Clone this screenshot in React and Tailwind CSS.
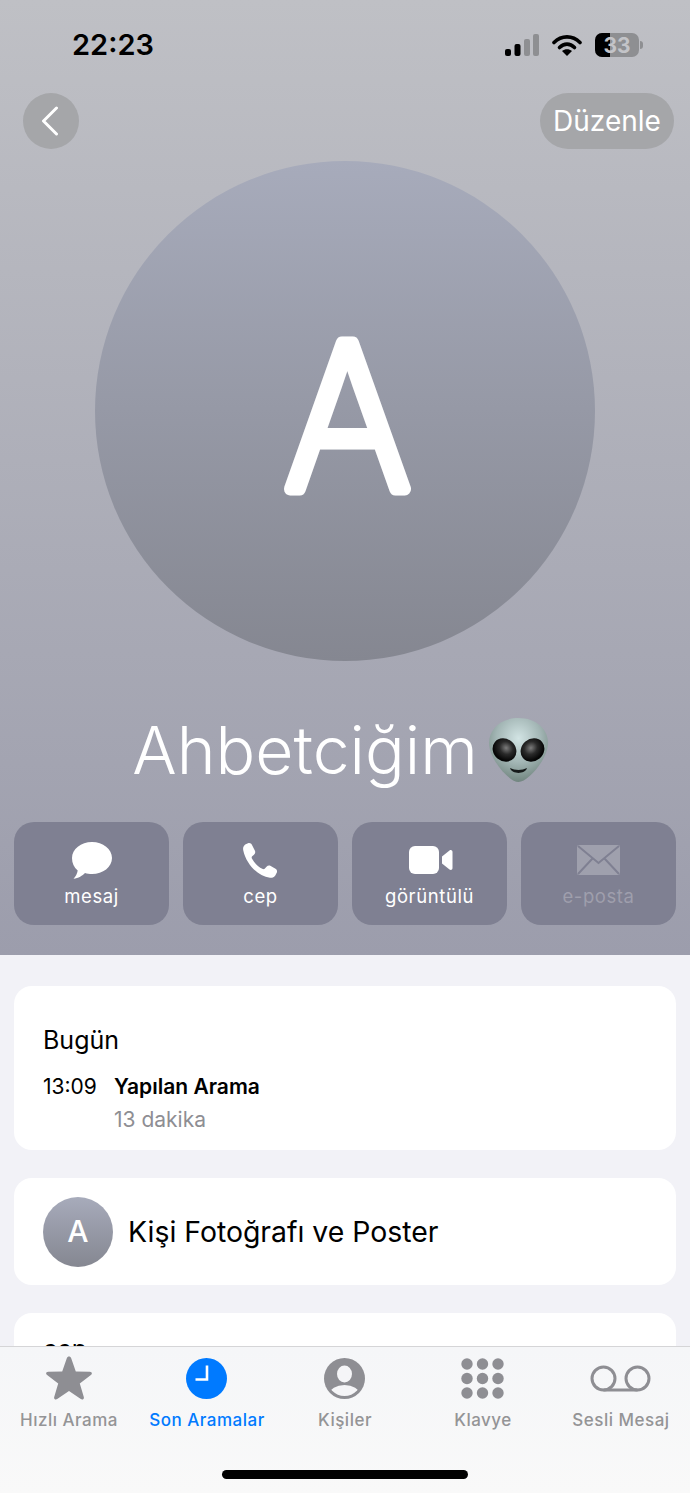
import React from "react";

const Action = ({ label, dim, children }) => (
  <div className="flex h-[103px] w-[155px] flex-col items-center rounded-[20px] bg-[#7f8092]">
    <div className={`mt-[19px] flex h-[38px] items-center justify-center ${dim ? "opacity-25" : ""}`}>{children}</div>
    <span className={`mt-[5px] text-[18.500px] leading-[24px] tracking-[0.6px] ${dim ? "text-white/25" : "text-white"}`}>{label}</span>
  </div>
);

const Tab = ({ label, active, children }) => (
  <div className="flex w-[138px] flex-col items-center">
    <div className="flex h-[46px] w-full items-center justify-center pr-[1px]">{children}</div>
    <span className={`mt-[8px] whitespace-nowrap text-[17px] leading-[22px] font-medium tracking-[0.5px] ${active ? "text-[#007aff]" : "text-[#949496]"}`}>{label}</span>
  </div>
);

const Alien = () => (
  <svg width="59" height="64" viewBox="0 0 59 64" className="ml-[11px] shrink-0">
    <defs>
      <radialGradient id="alienHead" cx="50%" cy="32%" r="68%">
        <stop offset="0%" stopColor="#d2e4e4" />
        <stop offset="55%" stopColor="#a3b6b5" />
        <stop offset="100%" stopColor="#71857f" />
      </radialGradient>
      <radialGradient id="alienEye" cx="50%" cy="38%" r="55%">
        <stop offset="0%" stopColor="#7c7c7c" />
        <stop offset="50%" stopColor="#2a2a2a" />
        <stop offset="100%" stopColor="#060606" />
      </radialGradient>
    </defs>
    <path d="M29.500 0C47 0 59 11 59 25C59 41 39 64 29.500 64C20 64 0 41 0 25C0 11 12 0 29.500 0Z" fill="url(#alienHead)" />
    <ellipse cx="15.500" cy="32" rx="12.500" ry="11" fill="url(#alienEye)" transform="rotate(40 15.500 32)" />
    <ellipse cx="43.500" cy="32" rx="12.500" ry="11" fill="url(#alienEye)" transform="rotate(-40 43.500 32)" />
    <path d="M21 50C26 52.500 33 52.500 38 50C36 56.500 23 56.500 21 50Z" fill="#161a1a" />
  </svg>
);

export default function App() {
  return (
    <div className="flex h-[1493px] w-[690px] flex-col overflow-hidden bg-[#f2f2f7] font-['Inter',sans-serif]">
      <header className="flex h-[955px] shrink-0 flex-col bg-gradient-to-b from-[#bfc0c5] to-[#9c9dac]">
        <div className="flex h-[93px] shrink-0 items-start justify-between pl-[72px] pr-[47px]">
          <span className="mt-[26px] text-[29px] leading-[38px] font-semibold text-black">22:23</span>
          <div className="mt-[33px] flex items-center">
            <svg width="34" height="22" viewBox="0 0 34 22">
              <rect x="0" y="15" width="6" height="7" rx="2" fill="#000" />
              <rect x="9.500" y="10" width="6" height="12" rx="2" fill="#000" />
              <rect x="19" y="5" width="6" height="17" rx="2" fill="#8e8f92" />
              <rect x="28" y="0" width="6" height="22" rx="2" fill="#8e8f92" />
            </svg>
            <svg width="30" height="22" viewBox="0 0 30 22" className="ml-[13px]">
              <path d="M2 8.500C9.500 1 20.500 1 28 8.500" fill="none" stroke="#000" strokeWidth="3.600" strokeLinecap="round" />
              <path d="M7.500 13.500C12 9 18 9 22.500 13.500" fill="none" stroke="#000" strokeWidth="3.600" strokeLinecap="round" />
              <path d="M15 22L10 17C13 14.500 17 14.500 20 17Z" fill="#000" />
            </svg>
            <div className="relative ml-[13px] h-[24px] w-[44px] overflow-hidden rounded-[7px] bg-[#8e8f92]">
              <div className="absolute inset-y-0 left-0 w-[15px] bg-black" />
              <span className="absolute inset-0 flex items-center justify-center text-[21px] leading-none font-bold text-[#c3c4c8]">33</span>
            </div>
            <div className="ml-[1px] h-[8px] w-[3px] rounded-r-[3px] bg-[#8e8f92]" />
          </div>
        </div>

        <div className="flex h-[56px] shrink-0 items-center justify-between pl-[23px] pr-[16px]">
          <div className="flex h-[56px] w-[56px] items-center justify-center rounded-full bg-[#a5a6a9]">
            <svg width="18" height="30" viewBox="0 0 18 30" className="mr-[2px]">
              <path d="M15.500 2L2.500 15L15.500 28" fill="none" stroke="#fff" strokeWidth="3" strokeLinecap="round" strokeLinejoin="round" />
            </svg>
          </div>
          <div className="flex h-[56px] w-[134px] items-center justify-center rounded-full bg-[#a5a6a9] text-[28px] text-white">Düzenle</div>
        </div>

        <div className="mx-auto mt-[12px] flex h-[500px] w-[500px] shrink-0 items-center justify-center rounded-full bg-gradient-to-b from-[#a7abbb] to-[#858791]">
          <svg width="200" height="260" viewBox="0 0 200 260">
            <text
              x="0"
              y="0"
              transform="translate(102.500 208) scale(0.96 1)"
              textAnchor="middle"
              fontFamily="Inter, sans-serif"
              fontSize="200"
              fontWeight="200"
              fill="#fff"
              stroke="#fff"
              strokeWidth="13"
              strokeLinejoin="round"
            >
              A
            </text>
          </svg>
        </div>

        <div className="mt-[55px] flex h-[68px] shrink-0 items-center justify-center pr-[10px]">
          <span className="text-[66px] leading-none font-light text-white">Ahbetciğim</span>
          <Alien />
        </div>

        <div className="mt-[38px] flex justify-between px-[14px]">
          <Action label="mesaj">
            <svg width="40" height="37" viewBox="0 0 40 37">
              <path d="M20 0C31 0 40 7 40 16C40 25 31 32 20 32C17.500 32 15 31.700 13 31C10.500 33.500 6.500 36.500 1.500 36.800C3.500 35 5.500 31 5.700 28.500C2 25.500 0 21 0 16C0 7 9 0 20 0Z" fill="#fff" />
            </svg>
          </Action>
          <Action label="cep">
            <svg width="34" height="35" viewBox="0 0 34 35" className="mr-[2px]">
              <path d="M2.200 1.500L5 0.300C6.700 -0.300 8.200 0.400 9 2L11.800 7.500C12.600 9 12.300 10.500 11 11.700L9.200 13.300C8.600 13.900 8.500 14.600 8.900 15.400C11.600 20.300 15 24 19.800 26C20.600 26.300 21.300 26.200 21.900 25.500L23.500 23.800C24.700 22.500 26.200 22.200 27.700 23L32.500 25.700C34 26.600 34.500 28.200 33.700 29.800L32.300 32.500C31.100 34.300 29.300 35 27 34.800C14.500 33.300 3 20.500 0.300 7.500C-0.300 5 0.400 2.900 2.200 1.500Z" fill="#fff" />
            </svg>
          </Action>
          <Action label="görüntülü">
            <svg width="44" height="28" viewBox="0 0 44 28" className="ml-[3px]">
              <rect x="0" y="0" width="30" height="28" rx="6" fill="#fff" />
              <path d="M33 10.500L40.500 4.500C41.800 3.500 43.500 4.300 43.500 6V22C43.500 23.700 41.800 24.500 40.500 23.500L33 17.500Z" fill="#fff" />
            </svg>
          </Action>
          <Action label="e-posta" dim>
            <svg width="43" height="30" viewBox="0 0 43 30">
              <rect x="0" y="0" width="43" height="30" rx="2" fill="#fff" />
              <path d="M1 1L21.500 18L42 1M1 29L15.500 13.500M42 29L27.500 13.500" fill="none" stroke="#7f8092" strokeWidth="2" />
            </svg>
          </Action>
        </div>
      </header>

      <main className="flex min-h-0 flex-1 flex-col gap-[28px] overflow-hidden px-[14px] pt-[31px]">
        <section className="h-[164px] shrink-0 rounded-[18px] bg-white pl-[29px] pt-[38px]">
          <div className="text-[25px] leading-[32px] text-black">Bugün</div>
          <div className="mt-[17px] flex text-[21px] leading-[28px]">
            <span className="w-[71px] text-black">13:09</span>
            <span className="font-semibold text-black">Yapılan Arama</span>
          </div>
          <div className="mt-[5px] pl-[71px] text-[21px] leading-[28px] text-[#8e8e93]">13 dakika</div>
        </section>

        <section className="flex h-[107px] shrink-0 items-center rounded-[18px] bg-white pl-[29px]">
          <div className="flex h-[70px] w-[70px] items-center justify-center rounded-full bg-gradient-to-b from-[#a7abbb] to-[#858791] text-[30px] font-medium text-white">A</div>
          <span className="ml-[15px] text-[28.400px] leading-[38px] text-black">Kişi Fotoğrafı ve Poster</span>
        </section>

        <section className="h-[120px] shrink-0 rounded-t-[18px] bg-white pl-[29px] pt-[20px]">
          <div className="text-[25px] leading-[32px] text-black">cep</div>
        </section>
      </main>

      <nav className="flex h-[147px] shrink-0 flex-col border-t border-[#d5d5d7] bg-gradient-to-b from-[#f5f6f8] to-[#f9f9f9]">
        <div className="mt-[8px] flex">
          <Tab label="Hızlı Arama">
            <svg width="46" height="44" viewBox="0 0 46 44">
              <path d="M23 0.500C24 0.500 24.800 1.100 25.200 2.200L29.800 15.400L43.800 15.700C46 15.800 46.600 17.800 44.900 19.100L33.800 27.500L37.800 41C38.400 43 36.500 44.300 34.800 43.100L23 35.100L11.200 43.100C9.500 44.300 7.600 43 8.200 41L12.200 27.500L1.100 19.100C-0.600 17.800 0 15.800 2.200 15.700L16.200 15.400L20.800 2.200C21.200 1.100 22 0.500 23 0.500Z" fill="#8e8e93" />
            </svg>
          </Tab>
          <Tab label="Son Aramalar" active>
            <svg width="41" height="41" viewBox="0 0 41 41">
              <circle cx="20.500" cy="20.500" r="20.500" fill="#007aff" />
              <path d="M21 7.500V21.500H9.500" fill="none" stroke="#fff" strokeWidth="2.600" />
            </svg>
          </Tab>
          <Tab label="Kişiler">
            <svg width="41" height="41" viewBox="0 0 41 41">
              <defs>
                <clipPath id="personClip"><circle cx="20.500" cy="20.500" r="17.500" /></clipPath>
              </defs>
              <circle cx="20.500" cy="20.500" r="20.500" fill="#8e8e93" />
              <g clipPath="url(#personClip)" fill="#f5f5f7">
                <ellipse cx="20.500" cy="16" rx="7.500" ry="8.500" />
                <ellipse cx="20.500" cy="36" rx="15" ry="9" />
              </g>
            </svg>
          </Tab>
          <Tab label="Klavye">
            <svg width="43" height="41" viewBox="0 0 43 41" fill="#8e8e93">
              <circle cx="6" cy="6" r="5.700" /><circle cx="21.500" cy="6" r="5.700" /><circle cx="37" cy="6" r="5.700" />
              <circle cx="6" cy="20.500" r="5.700" /><circle cx="21.500" cy="20.500" r="5.700" /><circle cx="37" cy="20.500" r="5.700" />
              <circle cx="6" cy="35" r="5.700" /><circle cx="21.500" cy="35" r="5.700" /><circle cx="37" cy="35" r="5.700" />
            </svg>
          </Tab>
          <Tab label="Sesli Mesaj">
            <svg width="61" height="27" viewBox="0 0 61 27">
              <circle cx="13.500" cy="13.500" r="11.500" fill="none" stroke="#8e8e93" strokeWidth="3" />
              <circle cx="47.500" cy="13.500" r="11.500" fill="none" stroke="#8e8e93" strokeWidth="3" />
              <path d="M13.500 25H47.500" stroke="#8e8e93" strokeWidth="3" />
            </svg>
          </Tab>
        </div>
        <div className="mx-auto mt-[39px] h-[9px] w-[246px] rounded-full bg-black" />
      </nav>
    </div>
  );
}
